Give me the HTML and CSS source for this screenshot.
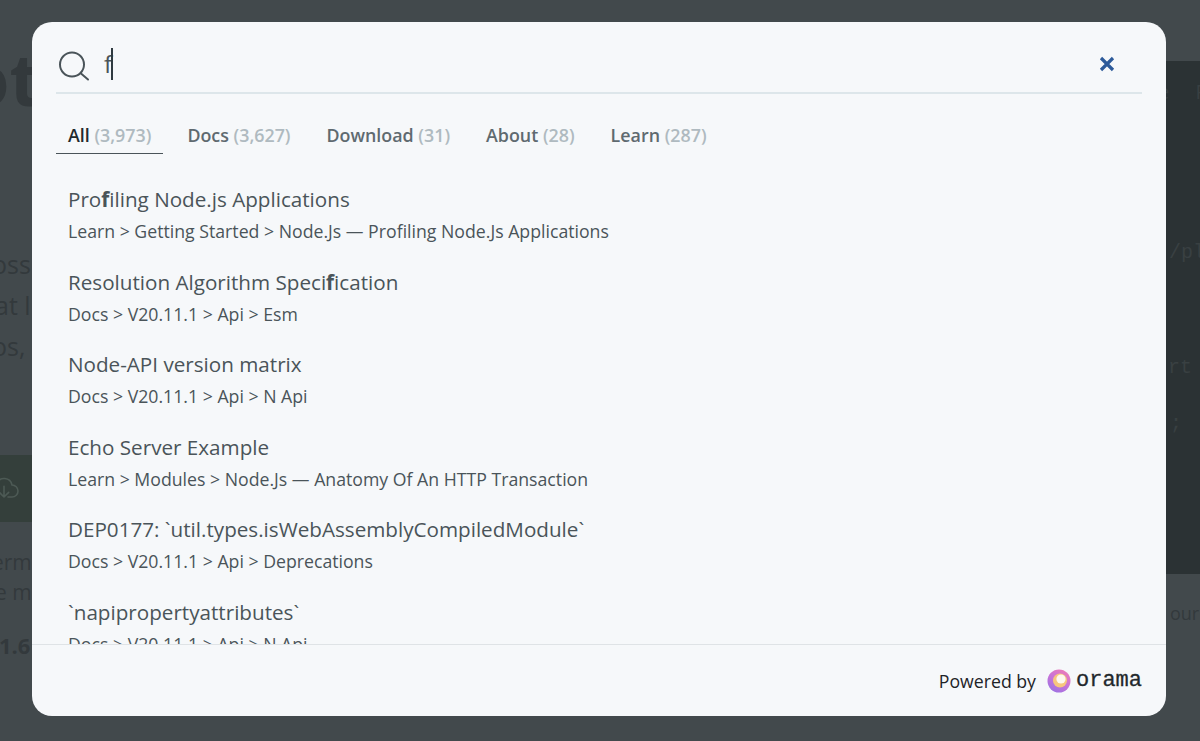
FILE: index.html
```html
<!DOCTYPE html>
<html lang="en">
<head>
<meta charset="utf-8">
<title>Search</title>
<link rel="stylesheet" href="styles.css">
</head>
<body>
<div class="backdrop">
  <div class="bg-title">ot</div>
  <div class="bg-lede"><div>oss</div><div class="nudge">at l</div><div>os,</div></div>
  <div class="bg-button">
    <svg width="32" height="32" viewBox="0 0 24 24" fill="none" stroke="#4d5a55" stroke-width="1.200" stroke-linecap="round" stroke-linejoin="round"><path d="M7 18a5 5 0 0 1-.5-10A6 6 0 0 1 18 9a4.500 4.500 0 0 1 0 9h-3"/><path d="M12 10v8m-3.500-3.500L12 18l3.500-3.500"/></svg>
  </div>
  <div class="bg-note"><div>erm</div><div class="nudge">e m</div></div>
  <div class="bg-version">1.6</div>
  <div class="bg-code">
    <div class="bg-nav">e P</div>
    <div class="bg-line bg-l1">/pl</div>
    <div class="bg-line bg-l2">rt</div>
    <div class="bg-line bg-l3">;</div>
  </div>
  <div class="bg-foot">our</div>
</div>

<div class="modal">
  <div class="search">
    <div class="search-row">
      <svg class="search-icon" width="32" height="32" viewBox="0 0 32 32" fill="none" stroke="#4a5459" stroke-width="2" stroke-linecap="round"><circle cx="13" cy="14.500" r="12"/><path d="M22 23.500 L29 29.500"/></svg>
      <div class="query"><span>f</span><span class="caret"></span></div>
      <svg class="close" width="16" height="16" viewBox="0 0 16 16" fill="none" stroke="#2c5a9a" stroke-width="3.200"><path d="M2 2 L14 14 M14 2 L2 14"/></svg>
    </div>
  </div>
  <div class="tabs">
    <div class="tab active">All <span class="count">(3,973)</span></div>
    <div class="tab">Docs <span class="count">(3,627)</span></div>
    <div class="tab">Download <span class="count">(31)</span></div>
    <div class="tab">About <span class="count">(28)</span></div>
    <div class="tab">Learn <span class="count">(287)</span></div>
  </div>
  <div class="results">
    <div class="result"><div class="r-title">Pro<b>f</b>iling Node.js Applications</div><div class="r-path">Learn &gt; Getting Started &gt; Node.Js — Profiling Node.Js Applications</div></div>
    <div class="result"><div class="r-title">Resolution Algorithm Speci<b>f</b>ication</div><div class="r-path">Docs &gt; V20.11.1 &gt; Api &gt; Esm</div></div>
    <div class="result"><div class="r-title">Node-API version matrix</div><div class="r-path">Docs &gt; V20.11.1 &gt; Api &gt; N Api</div></div>
    <div class="result"><div class="r-title">Echo Server Example</div><div class="r-path">Learn &gt; Modules &gt; Node.Js — Anatomy Of An HTTP Transaction</div></div>
    <div class="result"><div class="r-title">DEP0177: `util.types.isWebAssemblyCompiledModule`</div><div class="r-path">Docs &gt; V20.11.1 &gt; Api &gt; Deprecations</div></div>
    <div class="result"><div class="r-title">`napipropertyattributes`</div><div class="r-path">Docs &gt; V20.11.1 &gt; Api &gt; N Api</div></div>
  </div>
  <div class="footer">
    <span class="powered">Powered by</span>
    <svg class="orama-logo" width="24" height="24" viewBox="0 0 24 24">
      <defs>
        <linearGradient id="ring" x1="0.800" y1="0" x2="0.200" y2="1"><stop offset="0" stop-color="#ee7cb6"/><stop offset="0.500" stop-color="#c873d8"/><stop offset="1" stop-color="#9a72e4"/></linearGradient>
      </defs>
      <circle cx="12" cy="12" r="11.500" fill="url(#ring)"/>
      <circle cx="13" cy="11.500" r="7" fill="#f7c67e"/>
      <circle cx="14" cy="10" r="4.600" fill="#fdf8ee"/>
    </svg>
    <span class="orama-word">orama</span>
  </div>
</div>
</body>
</html>
```
FILE: styles.css
```css
* { box-sizing: border-box; }
html, body { margin: 0; height: 100%; }
body {
  width: 1200px;
  height: 741px;
  overflow: hidden;
  position: relative;
  font-family: "Open Sans", "Liberation Sans", sans-serif;
  background: #42494c;
}

/* dimmed page behind the dialog */
.backdrop { position: absolute; inset: 0; overflow: hidden; color: #33393c; }
.nudge { margin-left: 3px; }
.bg-title { position: absolute; left: -35px; top: 36px; font-size: 72px; font-weight: 700; line-height: 84px; }
.bg-lede { position: absolute; left: -8px; top: 244px; font-size: 25px; line-height: 41px; }
.bg-button { position: absolute; left: -40px; top: 455px; width: 72px; height: 67px; background: #343f3b; display: flex; align-items: center; justify-content: flex-end; }
.bg-button svg { transform: translateX(-12px); }
.bg-note { position: absolute; left: -8px; top: 547px; font-size: 21px; line-height: 30px; }
.bg-version { position: absolute; left: -1px; top: 631px; font-size: 22px; font-weight: 700; line-height: 28px; }
.bg-code { position: absolute; left: 1166px; top: 61px; width: 34px; height: 513px; background: #2b3234; color: #394042; font-family: "Liberation Mono", monospace; font-size: 20px; }
.bg-nav { position: absolute; left: -8px; top: 19px; white-space: nowrap; font-family: "Open Sans", sans-serif; font-size: 20px; line-height: 24px; word-spacing: 21px; color: #394042; }
.bg-line { position: absolute; left: 3px; white-space: nowrap; line-height: 24px; }
.bg-l1 { top: 180px; }
.bg-l2 { left: 2px; top: 295px; }
.bg-l3 { left: 4px; top: 351px; }
.bg-foot { position: absolute; left: 1170px; top: 600px; font-size: 18px; line-height: 26px; }

/* dialog */
.modal {
  position: absolute;
  left: 32px;
  top: 22px;
  width: 1134px;
  height: 694px;
  border-radius: 20px;
  background: #f6f8fa;
  display: flex;
  flex-direction: column;
  overflow: hidden;
}
.search { padding: 0 24px; }
.search-row {
  height: 72px;
  padding-top: 13px;
  border-bottom: 2px solid #dde6ea;
  display: flex;
  align-items: center;
  padding-left: 3px;
  padding-right: 27px;
}
.search-icon { flex: none; margin-top: 4px; }
.query { flex: 1; margin-left: 13px; display: flex; align-items: center; font-size: 24px; line-height: 32px; color: #4a5459; }
.caret { display: inline-block; width: 1.500px; height: 32px; background: #2f3a40; margin-left: -1px; }
.close { flex: none; }

.tabs { display: flex; padding: 29px 24px 0; gap: 12px; }
.tab {
  padding: 0 12px 6px;
  font-size: 17.850px;
  line-height: 24px;
  font-weight: 600;
  color: #5f6a70;
  border-bottom: 1px solid transparent;
  white-space: nowrap;
}
.tab.active { color: #22292d; border-bottom-color: #4a5459; }
.count { font-weight: 600; color: #afbac0; }

.results { flex: 1; min-height: 0; overflow: hidden; padding: 28px 36px 0; }
.result { height: 82.600px; }
.r-title { font-size: 20.650px; line-height: 34px; color: #4a5459; white-space: nowrap; }
.r-title b { font-weight: 700; }
.r-path { font-size: 17.700px; line-height: 30px; color: #4a5459; white-space: nowrap; }

.footer {
  flex: none;
  height: 72px;
  border-top: 1px solid #dfe3e6;
  display: flex;
  align-items: center;
  justify-content: flex-end;
  padding: 0 24px 0 0;
}
.powered { font-size: 17.700px; color: #1d2327; margin-right: 11px; }
.orama-logo { flex: none; margin-right: 5px; }
.orama-word { font-family: "Liberation Mono", monospace; font-size: 22px; color: #22282c; line-height: 24px; position: relative; top: 0; -webkit-text-stroke: 0.3px #22282c; }
```
